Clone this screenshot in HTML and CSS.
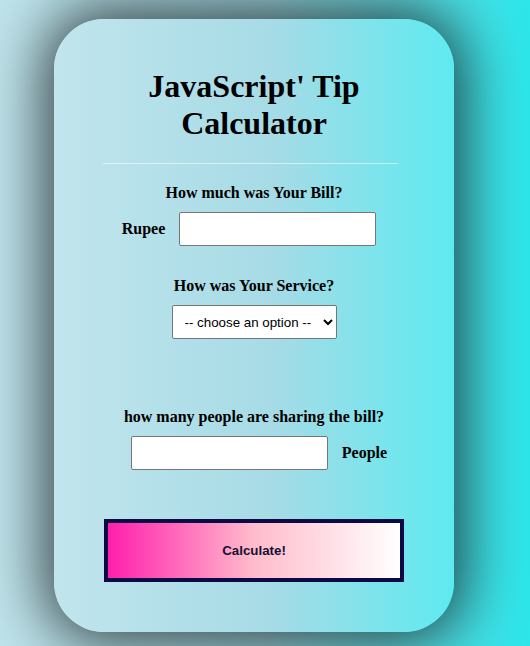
FILE: index.html
```html
<!DOCTYPE html>
<html lang="en">
<head>
<meta charset="utf-8">
<title>JavaScript' Tip Calculator</title>
<link rel="stylesheet" href="styles.css">
</head>
<body>
  <div class="card">
    <h1 class="title">JavaScript' Tip Calculator</h1>
    <hr class="divider">
    <p class="question q-bill">How much was Your Bill?</p>
    <div class="row row-bill">
      <span class="label">Rupee</span>
      <input class="field" type="text">
    </div>
    <p class="question q-service">How was Your Service?</p>
    <div class="select-wrap">
      <select class="service">
        <option>-- choose an option --</option>
        <option>30% - Outstanding</option>
        <option>20% - Good</option>
        <option>15% - It was OK</option>
        <option>10% - Bad</option>
        <option>5% - Terrible</option>
      </select>
    </div>
    <p class="question q-people">how many people are sharing the bill?</p>
    <div class="row row-people">
      <input class="field" type="text">
      <span class="label">People</span>
    </div>
    <button class="calc" type="button">Calculate!</button>
  </div>
</body>
</html>
```

FILE: styles.css
```css
html {
  height: 100%;
}

body {
  margin: 0;
  min-height: 100%;
  background: linear-gradient(to right, #c0e4ec 0%, #9fd6df 50%, #2ce6ea 100%);
  font-family: "Liberation Serif", "Times New Roman", serif;
  color: #000;
  overflow: hidden;
}

.card {
  box-sizing: border-box;
  width: 400px;
  height: 613px;
  margin: 19px 0 0 54px;
  padding: 49px 0 0;
  border-radius: 50px;
  background: linear-gradient(to right, #c1e5ed 0%, #a6dbe6 55%, #5eeaf0 100%);
  box-shadow: 0 0 60px 10px rgba(0, 0, 0, 0.7);
  text-align: center;
}

.title {
  margin: 0;
  padding: 0 70px;
  font-size: 32px;
  line-height: 37px;
  font-weight: bold;
}

.divider {
  box-sizing: border-box;
  width: 295px;
  height: 1px;
  margin: 21px 0 0 49px;
  border: 0;
  background: rgba(255, 255, 255, 0.55);
}

.question {
  margin: 0;
  font-size: 16px;
  line-height: 18px;
  font-weight: bold;
}

.q-bill {
  margin-top: 20px;
}

.q-service {
  margin-top: 31px;
}

.q-people {
  margin-top: 69px;
}

.row {
  display: flex;
  justify-content: center;
  align-items: center;
  gap: 14px;
  margin-top: 10px;
}

.row-bill {
  padding-right: 10px;
}

.row-people {
  padding-left: 10px;
}

.label {
  font-size: 16px;
  font-weight: bold;
  line-height: 18px;
}

.field {
  box-sizing: border-box;
  width: 197px;
  height: 34px;
  margin: 0;
  padding: 0 8px;
  border: 1px solid #767676;
  border-radius: 2px;
  background: #fff;
  font-family: "Liberation Sans", Arial, sans-serif;
  font-size: 13.33px;
}

.select-wrap {
  display: flex;
  justify-content: center;
  margin-top: 10px;
}

.service {
  box-sizing: border-box;
  width: 165px;
  height: 34px;
  margin: 0;
  padding: 0 6px 0 8px;
  border: 1px solid #767676;
  border-radius: 2px;
  background: #fff;
  color: #000;
  font-family: "Liberation Sans", Arial, sans-serif;
  font-size: 13.33px;
}

.calc {
  display: block;
  box-sizing: border-box;
  width: 300px;
  height: 63px;
  margin: 49px 0 0 50px;
  padding: 0;
  border: 4px solid #0b0a45;
  border-radius: 0;
  background: linear-gradient(to right, #ff1fad 0%, #ffbccb 50%, #ffffff 100%);
  color: #161030;
  font-family: "Liberation Sans", Arial, sans-serif;
  font-size: 13.33px;
  font-weight: bold;
}
```
